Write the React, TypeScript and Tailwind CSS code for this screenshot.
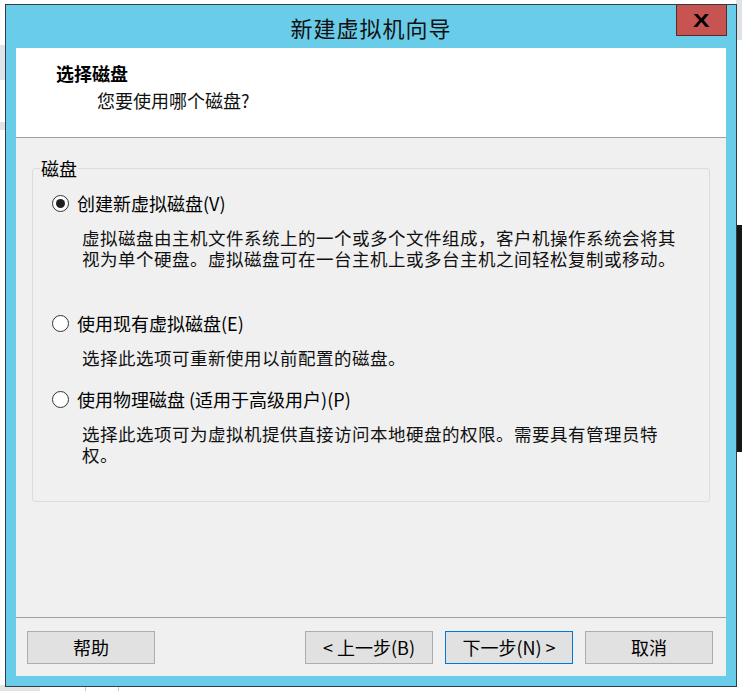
import { ReactNode } from 'react'

const FONT = "font-['Noto_Sans_CJK_SC','Liberation_Sans',sans-serif]"

function Radio({ checked, label }: { checked?: boolean; label: string }) {
  return (
    <div className="flex h-[24px] items-center pl-[19px]">
      <div className="flex h-[17px] w-[17px] items-center justify-center rounded-full border border-[#333333] bg-white">
        {checked && <div className="h-[9px] w-[9px] rounded-full bg-[#1f1f1f]" />}
      </div>
      <span className="ml-[8px] text-[18px] leading-[24px] text-black">{label}</span>
    </div>
  )
}

function Desc({ children }: { children: ReactNode }) {
  return (
    <div className="mt-[12px] pl-[49px] text-[17.5px] leading-[21px] tracking-[0.5px] text-[#111]">
      {children}
    </div>
  )
}

function Button({ label, primary }: { label: string; primary?: boolean }) {
  return (
    <button
      className={`h-[33px] w-[128px] border bg-[#e1e1e1] text-[18px] leading-[31px] text-black ${
        primary ? 'border-[#0078d7]' : 'border-[#adadad]'
      }`}
    >
      {label}
    </button>
  )
}

export default function App() {
  return (
    <div className={`relative h-[691px] w-[742px] overflow-hidden bg-white ${FONT}`}>
      {/* whatever sits behind the dialog */}
      <div className="absolute left-0 top-[45px] h-[35px] w-[6px] bg-[#dfe4ea]" />
      <div className="absolute left-0 top-[122px] h-[8px] w-[6px] bg-[#dfe4ea]" />
      <div className="absolute right-0 top-0 h-[40px] w-[6px] bg-[#dfe3e8]" />
      <div className="absolute right-0 top-[225px] h-[227px] w-[6px] bg-[#161616]" />
      <div className="absolute bottom-0 left-0 h-[6px] w-[40px] bg-[#e3e3e3]" />
      <div className="absolute bottom-0 left-[85px] h-[6px] w-[1px] bg-[#c8c8c8]" />
      <div className="absolute bottom-0 left-[118px] h-[6px] w-[1px] bg-[#c8c8c8]" />

      <div className="relative pl-[5px] pt-[4px]">
        <div className="flex h-[683px] w-[732px] flex-col border border-[#2f3d44] bg-[#69cce8]">
          {/* title bar */}
          <div className="grid h-[43px] shrink-0 grid-cols-[1fr_auto_1fr] items-start">
            <div />
            <div className="pt-[1px] text-[22px] leading-[43px] tracking-[1px] text-[#111]">新建虚拟机向导</div>
            <div className="flex justify-end pr-[9px]">
              <div className="flex h-[31px] w-[51px] items-center justify-center border border-[#5b2a27] border-t-0 bg-[#c75450] font-['Liberation_Sans',sans-serif] text-[19px] font-bold leading-none text-black">
                <span className="inline-block scale-x-[1.3]">X</span>
              </div>
            </div>
          </div>

          {/* client area */}
          <div className="mx-[10px] flex h-[628px] flex-col bg-[#f0f0f0]">
            <div className="h-[89px] shrink-0 bg-white pl-[40px] pt-[14px]">
              <div className="text-[18px] font-bold leading-[22px] text-black">选择磁盘</div>
              <div className="ml-[41px] mt-[5px] text-[18px] leading-[22px] text-[#111]">您要使用哪个磁盘?</div>
            </div>
            <div className="h-px shrink-0 bg-[#a0a0a0]" />

            <div className="flex-1 px-[16px] pt-[20px]">
              <fieldset className="rounded-[3px] border border-[#dcdcdc] pb-[36px]">
                <legend className="ml-[7px] px-[1px] text-[18px] leading-[20px] text-black">磁盘</legend>
                <div className="mt-[13px]">
                  <Radio checked label="创建新虚拟磁盘(V)" />
                </div>
                <Desc>
                  虚拟磁盘由主机文件系统上的一个或多个文件组成，客户机操作系统会将其
                  <br />
                  视为单个硬盘。虚拟磁盘可在一台主机上或多台主机之间轻松复制或移动。
                </Desc>
                <div className="mt-[42px]">
                  <Radio label="使用现有虚拟磁盘(E)" />
                </div>
                <Desc>选择此选项可重新使用以前配置的磁盘。</Desc>
                <div className="mt-[19px]">
                  <Radio label="使用物理磁盘 (适用于高级用户)(P)" />
                </div>
                <Desc>
                  选择此选项可为虚拟机提供直接访问本地硬盘的权限。需要具有管理员特
                  <br />
                  权。
                </Desc>
              </fieldset>
            </div>

            <div className="flex h-[59px] shrink-0 items-start border-t border-[#a0a0a0] pl-[11px] pr-[13px] pt-[13px]">
              <Button label="帮助" />
              <div className="ml-auto flex gap-[12px]">
                <Button label="< 上一步(B)" />
                <Button label="下一步(N) >" primary />
                <Button label="取消" />
              </div>
            </div>
          </div>
        </div>
      </div>
    </div>
  )
}
